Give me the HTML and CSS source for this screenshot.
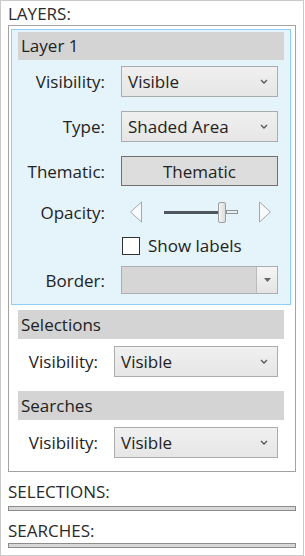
FILE: index.html
```html
<!DOCTYPE html>
<html lang="en">
<head>
    <meta charset="UTF-8">
    <meta name="viewport" content="width=device-width, initial-scale=1.0">
    <title>Layers</title>
    <link rel="stylesheet" href="styles.css">
</head>
<body>
    <div class="frame">
        <div class="caption">LAYERS:</div>
        <div class="group">
            <div class="layer">
                <div class="head">Layer 1</div>
                <div class="field first">
                    <div class="label">Visibility:</div>
                    <div class="select">Visible<svg class="chev" width="8" height="5" viewBox="0 0 8 5"><path d="M1 1 L4 4 L7 1" fill="none" stroke="#555" stroke-width="1.3"/></svg></div>
                </div>
                <div class="field">
                    <div class="label">Type:</div>
                    <div class="select">Shaded Area<svg class="chev" width="8" height="5" viewBox="0 0 8 5"><path d="M1 1 L4 4 L7 1" fill="none" stroke="#555" stroke-width="1.3"/></svg></div>
                </div>
                <div class="field">
                    <div class="label">Thematic:</div>
                    <div class="button">Thematic</div>
                </div>
                <div class="field opacity">
                    <div class="label">Opacity:</div>
                    <div class="slider">
                        <svg class="arrow" width="14" height="22" viewBox="0 0 14 22"><path d="M12.5 1 L1.5 11 L12.5 21 Z" fill="#f7f9fa" stroke="#a4a8ab" stroke-width="1"/></svg>
                        <div class="track">
                            <div class="fill"></div>
                            <div class="thumb"></div>
                            <div class="rest"></div>
                        </div>
                        <svg class="arrow" width="14" height="22" viewBox="0 0 14 22"><path d="M1.5 1 L12.5 11 L1.5 21 Z" fill="#f7f9fa" stroke="#a4a8ab" stroke-width="1"/></svg>
                    </div>
                </div>
                <div class="field check">
                    <div class="label"></div>
                    <label class="checkbox"><span class="box"></span>Show labels</label>
                </div>
                <div class="field border">
                    <div class="label">Border:</div>
                    <div class="combo">
                        <div class="combo-text"></div>
                        <div class="combo-btn"><svg width="7" height="4" viewBox="0 0 7 4"><path d="M0 0 L7 0 L3.5 4 Z" fill="#666"/></svg></div>
                    </div>
                </div>
            </div>

            <div class="section">
                <div class="head">Selections</div>
                <div class="field">
                    <div class="label">Visibility:</div>
                    <div class="select">Visible<svg class="chev" width="8" height="5" viewBox="0 0 8 5"><path d="M1 1 L4 4 L7 1" fill="none" stroke="#555" stroke-width="1.3"/></svg></div>
                </div>
            </div>

            <div class="section">
                <div class="head">Searches</div>
                <div class="field">
                    <div class="label">Visibility:</div>
                    <div class="select">Visible<svg class="chev" width="8" height="5" viewBox="0 0 8 5"><path d="M1 1 L4 4 L7 1" fill="none" stroke="#555" stroke-width="1.3"/></svg></div>
                </div>
            </div>
        </div>

        <div class="caption lower">SELECTIONS:</div>
        <div class="collapsed"></div>
        <div class="caption lower">SEARCHES:</div>
        <div class="collapsed last"></div>
    </div>
</body>
</html>
```

FILE: styles.css
```css
body{
    margin:0;
    padding:0;
    background:#fff;
    font-family:"Open Sans", "Noto Sans", sans-serif;
    color:#222;
}
.frame{
    box-sizing:border-box;
    width:304px;
    height:556px;
    border:1px solid #c9c9c9;
    padding:0 7px 0 7px;
}
.caption{
    font-size:17px;
    line-height:22px;
    margin-top:2px;
    color:#2a2a2a;
}
.caption.lower{
    margin-top:9px;
}
.group{
    border:1px solid #a3a3a3;
    padding:3px 0 13px 0;
}
.layer{
    margin:0 4px 0 2px;
    border:1px solid #8fd0f2;
    background:#e5f3fb;
    padding:2px 6px 10px 6px;
}
.head{
    height:28px;
    line-height:28px;
    background:#d4d4d4;
    font-size:17px;
    padding-left:3px;
}
.field{
    display:grid;
    grid-template-columns:87px 1fr;
    column-gap:16px;
    align-items:center;
    margin-top:14px;
    padding-right:6px;
    font-size:17px;
}
.field.first{
    margin-top:6px;
}
.label{
    text-align:right;
}
.select{
    box-sizing:border-box;
    height:31px;
    border:1px solid #acacac;
    background:linear-gradient(#f0f0f0, #e6e6e6);
    padding-left:6px;
    display:flex;
    align-items:center;
    justify-content:space-between;
    padding-right:9px;
}
.button{
    box-sizing:border-box;
    height:30px;
    border:1px solid #707070;
    background:#dddddd;
    display:flex;
    align-items:center;
    justify-content:center;
}
.field.opacity{
    margin-top:14px;
}
.slider{
    height:24px;
    display:flex;
    align-items:center;
    padding-left:8px;
}
.track{
    width:74px;
    margin-left:21px;
    margin-right:20px;
    display:flex;
    align-items:center;
}
.fill{
    width:54px;
    height:3px;
    background:#4d575d;
}
.thumb{
    box-sizing:border-box;
    width:8px;
    height:21px;
    border:1px solid #9aa0a4;
    border-radius:2px;
    background:linear-gradient(90deg, #f4f4f4, #dcdcdc);
}
.rest{
    box-sizing:border-box;
    width:12px;
    height:4px;
    border:1px solid #8d959a;
    background:#eceeef;
}
.field.check{
    margin-top:12px;
}
.checkbox{
    display:flex;
    align-items:center;
    height:19px;
}
.box{
    box-sizing:border-box;
    width:18px;
    height:18px;
    border:1px solid #333;
    background:#fff;
    margin-left:1px;
    margin-right:8px;
}
.field.border{
    margin-top:11px;
}
.combo{
    box-sizing:border-box;
    height:28px;
    border:1px solid #adadad;
    background:#d6d6d6;
    display:flex;
}
.combo-text{
    flex:1;
}
.combo-btn{
    width:20px;
    border-left:1px solid #bcbcbc;
    background:linear-gradient(#f5f5f5, #e4e4e4);
    display:flex;
    align-items:center;
    justify-content:center;
}
.section{
    margin:5px 11px 0 9px;
}
.section + .section{
    margin-top:14px;
}
.section .head{
    height:29px;
    line-height:29px;
}
.section .field{
    grid-template-columns:80px 1fr;
    margin-top:7px;
}
.collapsed{
    box-sizing:border-box;
    height:5px;
    margin-top:3px;
    border:1px solid #8c8c8c;
    background:#d8d8d8;
}
.collapsed.last{
    margin-top:1px;
}
```
